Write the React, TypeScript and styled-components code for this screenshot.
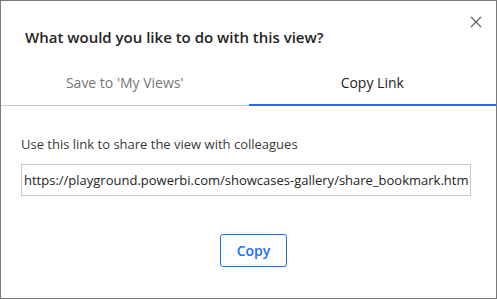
import React, { ReactElement, useState } from "react";
import styled, { createGlobalStyle } from "styled-components";

const GlobalStyle = createGlobalStyle`
  html, body {
    margin: 0;
    padding: 0;
    background: white;
  }

  * {
    box-sizing: border-box;
  }
`;

const Dialog = styled.div`
  display: flex;
  flex-direction: column;
  width: 497px;
  height: 299px;

  border: 1px solid #7a7a7a;
  background: white;

  font-family: "Open Sans", "Noto Sans", sans-serif;
  color: #252423;
`;

const Header = styled.div`
  display: flex;
  justify-content: space-between;
  align-items: flex-start;

  padding: 13px 12px 0 24px;
`;

const Title = styled.h2`
  margin: 0;
  margin-top: 13px;

  font-size: 15px;
  font-weight: 600;
  line-height: 20px;
  color: #252423;
`;

const CloseButton = styled.button`
  display: flex;
  align-items: center;
  justify-content: center;
  width: 16px;
  height: 16px;
  padding: 0;

  border: none;
  background: none;
  cursor: pointer;
`;

const Tabs = styled.div`
  display: grid;
  grid-template-columns: 1fr 1fr;

  margin-top: 19px;
`;

const Tab = styled.button<{ $active?: boolean }>`
  height: 40px;
  padding: 0 0 6px;

  border: none;
  border-bottom: ${(p) => (p.$active ? "2px solid #1a6ef5" : "1px solid #c8c8c8")};
  margin-bottom: ${(p) => (p.$active ? "0" : "1px")};
  background: none;

  font-family: inherit;
  font-size: 14px;
  color: ${(p) => (p.$active ? "#252423" : "#777777")};
  cursor: pointer;
`;

const Body = styled.div`
  display: flex;
  flex-direction: column;

  padding: 28px 26px 0 20px;
`;

const HelpText = styled.p`
  margin: 0;

  font-size: 13px;
  line-height: 18px;
  color: #3b3a39;
`;

const LinkInput = styled.input`
  width: 450px;
  height: 32px;
  margin-top: 11px;
  padding: 0 2px;

  border: 1px solid #c8c8c8;
  border-radius: 0;
  outline: none;

  font-family: "Open Sans", "Noto Sans", sans-serif;
  font-size: 13px;
  color: #252423;
`;

const Footer = styled.div`
  display: flex;
  justify-content: center;

  padding: 38px 0 0 10px;
`;

const CopyButton = styled.button`
  width: 67px;
  height: 33px;

  border: 1px solid #1a6ef5;
  border-radius: 3px;
  background: white;

  font-family: inherit;
  font-size: 14px;
  font-weight: 600;
  color: #1a6ef5;
  cursor: pointer;
`;

const link = "https://playground.powerbi.com/showcases-gallery/share_bookmark.html";

export default function App(): ReactElement {
  const [tab, setTab] = useState("copy");

  return (
    <>
      <GlobalStyle />
      <Dialog>
        <Header>
          <Title>What would you like to do with this view?</Title>
          <CloseButton aria-label="Close">
            <svg width="12" height="12" viewBox="0 0 12 12">
              <path d="M1 1L11 11M11 1L1 11" stroke="#605e5c" strokeWidth="1.1" />
            </svg>
          </CloseButton>
        </Header>
        <Tabs>
          <Tab $active={tab === "save"} onClick={() => setTab("save")}>
            Save to 'My Views'
          </Tab>
          <Tab $active={tab === "copy"} onClick={() => setTab("copy")}>
            Copy Link
          </Tab>
        </Tabs>
        <Body>
          <HelpText>Use this link to share the view with colleagues</HelpText>
          <LinkInput readOnly value={link} />
        </Body>
        <Footer>
          <CopyButton>Copy</CopyButton>
        </Footer>
      </Dialog>
    </>
  );
}
